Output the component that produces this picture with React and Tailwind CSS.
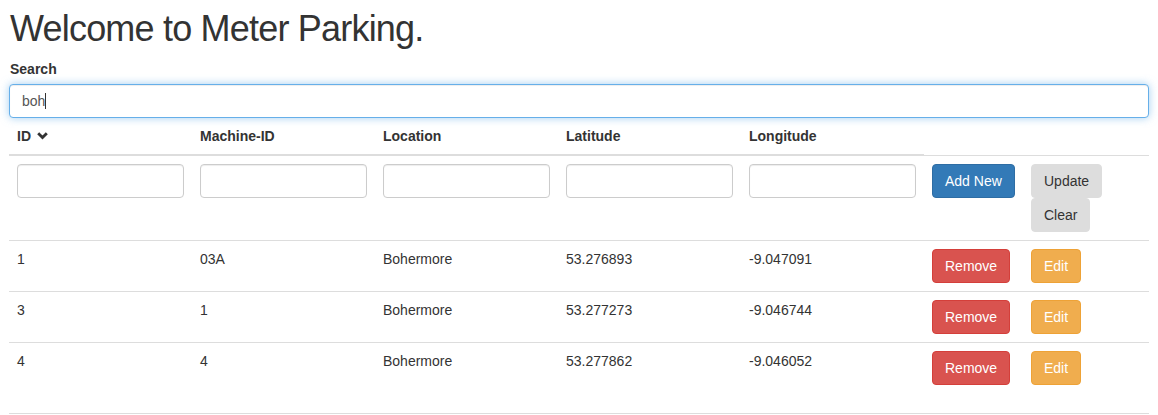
import React from "react";

const rows = [
  { id: "1", mid: "03A", loc: "Bohermore", lat: "53.276893", lng: "-9.047091" },
  { id: "3", mid: "1", loc: "Bohermore", lat: "53.277273", lng: "-9.046744" },
  { id: "4", mid: "4", loc: "Bohermore", lat: "53.277862", lng: "-9.046052" },
];

const inputCls =
  "block w-full h-[34px] px-3 py-[6px] text-[14px] text-[#555] bg-white border border-[#ccc] rounded-[4px] shadow-[inset_0_1px_1px_rgba(0,0,0,0.075)] outline-none";

const btn = "inline-block h-[34px] px-3 text-[14px] leading-[20px] rounded-[4px] border";

export default function App() {
  return (
    <div
      className="px-[9px] text-[14px] leading-[20px] text-[#333] bg-white"
      style={{ fontFamily: '"Liberation Sans", Arial, Helvetica, sans-serif' }}
    >
      <h1 className="mt-[9px] mb-[10px] text-[36px] leading-[40px] font-normal pl-[1px] tracking-[-0.8px]">
        Welcome to Meter Parking.
      </h1>
      <label className="block font-bold mb-[5px] pl-[1px]">Search</label>
      <div className="flex items-center h-[34px] px-3 bg-white border border-[#66afe9] rounded-[4px] shadow-[inset_0_1px_1px_rgba(0,0,0,0.075),0_0_8px_rgba(102,175,233,0.6)] text-[#555]">
        <span>boh</span>
        <span className="inline-block w-px h-[16px] bg-[#333]" />
      </div>

      <table className="w-full table-fixed border-collapse">
        <colgroup>
          <col className="w-[183px]" />
          <col className="w-[183px]" />
          <col className="w-[183px]" />
          <col className="w-[183px]" />
          <col className="w-[183px]" />
          <col className="w-[99px]" />
          <col className="w-[126px]" />
        </colgroup>
        <thead>
          <tr>
            <th className="p-2 text-left align-bottom font-bold border-b-2 border-[#ddd]">
              <span className="inline-flex items-center gap-[6px]">
                ID
                <svg width="11" height="8" viewBox="0 0 11 8" className="mt-[-1px]">
                  <path d="M1.2 1.2 L5.5 5.6 L9.8 1.2" fill="none" stroke="#333" strokeWidth="2.8" />
                </svg>
              </span>
            </th>
            <th className="p-2 text-left align-bottom font-bold border-b-2 border-[#ddd]">Machine-ID</th>
            <th className="p-2 text-left align-bottom font-bold border-b-2 border-[#ddd]">Location</th>
            <th className="p-2 text-left align-bottom font-bold border-b-2 border-[#ddd]">Latitude</th>
            <th className="p-2 text-left align-bottom font-bold border-b-2 border-[#ddd]">Longitude</th>
          </tr>
        </thead>
        <tbody>
          <tr>
            {[0, 1, 2, 3, 4].map((i) => (
              <td key={i} className="p-2 align-top border-t border-[#ddd]">
                <input className={inputCls} />
              </td>
            ))}
            <td className="p-2 align-top border-t border-[#ddd]">
              <button className={`${btn} bg-[#337ab7] border-[#2e6da4] text-white`}>Add New</button>
            </td>
            <td className="p-2 align-top border-t border-[#ddd]">
              <div className="flex flex-col items-start">
                <button className={`${btn} bg-[#dddddd] border-[#dddddd] text-[#333]`}>Update</button>
                <button className={`${btn} bg-[#dddddd] border-[#dddddd] text-[#333]`}>Clear</button>
              </div>
            </td>
          </tr>
          {rows.map((r) => (
            <tr key={r.id}>
              <td className="p-2 align-top border-t border-[#ddd]">{r.id}</td>
              <td className="p-2 align-top border-t border-[#ddd]">{r.mid}</td>
              <td className="p-2 align-top border-t border-[#ddd]">{r.loc}</td>
              <td className="p-2 align-top border-t border-[#ddd]">{r.lat}</td>
              <td className="p-2 align-top border-t border-[#ddd]">{r.lng}</td>
              <td className="p-2 align-top border-t border-[#ddd]">
                <button className={`${btn} bg-[#d9534f] border-[#d43f3a] text-white`}>Remove</button>
              </td>
              <td className="p-2 align-top border-t border-[#ddd]">
                <button className={`${btn} bg-[#f0ad4e] border-[#eea236] text-white`}>Edit</button>
              </td>
            </tr>
          ))}
        </tbody>
      </table>
      <div className="mt-5 border-t border-[#ddd]" />
    </div>
  );
}
